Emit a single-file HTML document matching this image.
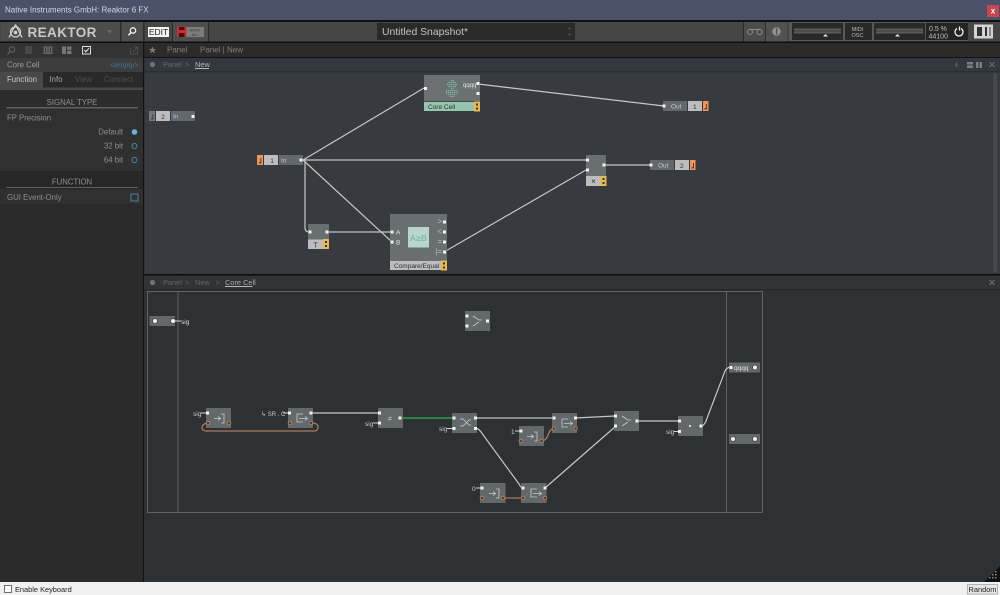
<!DOCTYPE html>
<html><head><meta charset="utf-8"><style>
html,body{margin:0;padding:0;width:1000px;height:595px;overflow:hidden;background:#222}
svg{display:block;filter:blur(.35px)}
text{font-family:"Liberation Sans",sans-serif;font-size:8px}
.w{fill:none;stroke:#c4c7c6;stroke-width:1.2}
.n{fill:#63686a}
.o{fill:none;stroke:#a87a62;stroke-width:1.3}
.ic{fill:none;stroke:#c8cccc;stroke-width:.8}
.lb{fill:#2b2f30;font-size:6.5px}
</style></head><body>
<svg width="1000" height="595" viewBox="0 0 1000 595" xmlns="http://www.w3.org/2000/svg">
<defs>
<g id="p"><rect x="-1.5" y="-1.5" width="3" height="3" fill="#f2f2f2"/></g>
<g id="c"><circle r="2" fill="#f2f2f2"/><circle r="2.6" fill="none" stroke="#45494a" stroke-width=".7"/></g>
<g id="op"><circle r="1.8" fill="#4a3f3a" stroke="#b07c62" stroke-width="1"/></g>
<g id="y"><rect width="6" height="10" fill="#e8b94e"/><rect x="2" y="2" width="2" height="2" fill="#3d3520"/><rect x="2" y="6" width="2" height="2" fill="#3d3520"/></g>
<g id="note"><path d="M3.8 2v5.4H1.6V6.2h1.4V2z" fill="#2f2f2f"/></g>
</defs>
<!-- title bar -->
<rect width="1000" height="20" fill="#4b5169"/>
<text x="5" y="12.500" fill="#d4d6de" font-size="8">Native Instruments GmbH: Reaktor 6 FX</text>
<rect x="987" y="5" width="12" height="12" fill="#c9454f"/>
<text x="993" y="13.300" text-anchor="middle" fill="#fff" style="font-size:8px;font-weight:bold">x</text>
<rect y="20" width="1000" height="2" fill="#111"/>
<!-- toolbar -->
<rect y="22" width="1000" height="19.500" fill="#464646"/>
<rect x="1" y="22" width="119" height="19.500" fill="#4c4c4c"/>
<rect x="120" y="22" width="1.500" height="19.500" fill="#2c2c2c"/>
<rect x="143" y="22" width="1.500" height="19.500" fill="#2c2c2c"/>
<rect x="121.500" y="22" width="21.500" height="19.500" fill="#4e4e4e"/>
<rect x="172" y="22" width="1" height="19.500" fill="#2c2c2c"/>
<rect x="208" y="22" width="1" height="19.500" fill="#2c2c2c"/>
<rect x="173" y="22" width="35" height="19.500" fill="#4e4e4e"/>
<circle cx="15.500" cy="32" r="5" fill="none" stroke="#d0d0d0" stroke-width="1.300"/>
<path d="M15.500 24.500L9 37.500M15.500 24.500L22 37.500" stroke="#d0d0d0" stroke-width="1.200" fill="none"/>
<circle cx="15.500" cy="32.500" r="1.800" fill="#d0d0d0"/>
<text x="27.500" y="37" fill="#c9c9c9" style="font-size:13.500px;font-weight:bold;letter-spacing:.4px">REAKTOR</text>
<path d="M106.500 30h6l-3 3.500z" fill="#666"/>
<circle cx="133" cy="30.500" r="2.700" fill="none" stroke="#f0f0f0" stroke-width="1.300"/>
<path d="M131 32.500l-2.500 2.800" stroke="#f0f0f0" stroke-width="1.500"/>
<rect x="148" y="27" width="21" height="10" fill="#f4f4f4"/>
<text x="158.500" y="35.200" text-anchor="middle" fill="#1c1c1c" style="font-size:8.500px">EDIT</text>
<rect x="177" y="26.500" width="9.500" height="10.500" fill="#d22a2a"/>
<rect x="179" y="27" width="5.500" height="3" fill="#3a1414"/><rect x="179" y="33" width="5.500" height="4" fill="#3a1414"/>
<rect x="186.500" y="27" width="17.500" height="10" fill="#7d7d7d"/>
<text x="195" y="31.500" text-anchor="middle" fill="#333" style="font-size:4px">HOST</text>
<text x="195" y="35.800" text-anchor="middle" fill="#333" style="font-size:4px">ALL</text>
<rect x="377" y="23" width="198" height="17" fill="#2a2a2a"/>
<text x="382" y="35" fill="#c3c3c3" style="font-size:10.400px">Untitled Snapshot*</text>
<path d="M567 29.500l2.500-2.500 2.500 2.500zM567 33.500l2.500 2.500 2.500-2.500z" fill="#484848"/>
<rect x="743" y="22" width="1" height="19.500" fill="#2c2c2c"/><rect x="765" y="22" width="1" height="19.500" fill="#2c2c2c"/><rect x="766" y="22" width="21" height="19.500" fill="#515151"/>
<rect x="744" y="22" width="21" height="19.500" fill="#4c4c4c"/>
<circle cx="750" cy="32" r="2.500" fill="none" stroke="#8c8c8c"/><circle cx="759.500" cy="32" r="2.500" fill="none" stroke="#8c8c8c"/><path d="M750 29.500h9.500" stroke="#8c8c8c"/>
<circle cx="776.500" cy="31.500" r="4.300" fill="#8f8f8f"/><rect x="776" y="28.500" width="1.200" height="6" fill="#4d4d4d"/>
<rect x="789" y="22" width="179" height="19" fill="#585858"/>
<rect x="792" y="23" width="83" height="17" fill="#292929"/>
<rect x="843" y="23" width="2" height="17" fill="#585858"/>
<rect x="872" y="23" width="2" height="17" fill="#585858"/>
<rect x="874" y="23" width="51" height="17" fill="#292929"/>
<rect x="925" y="23" width="2" height="17" fill="#585858"/>
<rect x="926" y="23" width="42" height="17" fill="#242424"/>
<rect x="794" y="28.500" width="47" height="5" fill="#5c5c5c"/><rect x="794" y="30.500" width="47" height="1" fill="#3a3a3a"/>
<path d="M823 36.500l2.500-2.500 2.500 2.500z" fill="#e8e8e8"/>
<text x="857.500" y="30.800" text-anchor="middle" fill="#bbb" style="font-size:5.500px">MIDI</text>
<text x="857.500" y="37.200" text-anchor="middle" fill="#bbb" style="font-size:5.500px">OSC</text>
<rect x="876" y="28.500" width="47" height="5" fill="#5c5c5c"/><rect x="876" y="30.500" width="47" height="1" fill="#3a3a3a"/>
<path d="M895 36.500l2.500-2.500 2.500 2.500z" fill="#e8e8e8"/>
<text x="929" y="31" fill="#c0c0c0" style="font-size:7px">0.5 %</text>
<text x="928.500" y="38.500" fill="#c0c0c0" style="font-size:7px">44100</text>
<path d="M957 28.500a4 4 0 1 0 4 0" fill="none" stroke="#eee" stroke-width="1.300"/><path d="M960 26.500v4" stroke="#eee" stroke-width="1.300" transform="translate(-.5)"/>
<rect x="974" y="24.500" width="19" height="14" fill="#d4d4d4"/>
<rect x="977" y="27" width="5" height="9" fill="#333"/><rect x="985" y="27" width="2" height="9" fill="#333"/><rect x="989" y="27" width="2" height="9" fill="#888"/>
<rect y="41.500" width="1000" height="1.500" fill="#0f0f0f"/>
<!-- main top bars -->
<rect x="144" y="43" width="856" height="14" fill="#2d2b29"/>
<text x="167" y="52.500" fill="#7d7d7d" font-size="8">Panel</text>
<text x="200" y="52.500" fill="#7d7d7d" font-size="8">Panel | New</text>
<path d="M152.500 46.500l1 2.500h2.500l-2 1.600.8 2.600-2.300-1.500-2.300 1.500.8-2.600-2-1.600h2.500z" fill="#7c7c7c"/>
<rect x="144" y="57" width="856" height="1" fill="#131313"/>
<rect x="144" y="58" width="856" height="13" fill="#32383d"/>
<rect x="144" y="71" width="856" height="1.500" fill="#2b2e31"/>
<rect x="144" y="72.500" width="856" height="201.500" fill="#373b3f"/>
<circle cx="152.500" cy="64.500" r="2.600" fill="#6f7376"/>
<text x="163" y="67" fill="#666c70" style="font-size:7.400px">Panel</text>
<text x="185" y="67" fill="#666c70" style="font-size:7.400px">&gt;</text>
<text x="195" y="67" fill="#b5b8ba" style="font-size:7.400px">New</text>
<rect x="195" y="68" width="14" height="1" fill="#b5b8ba"/>
<path d="M955 64h3M956.500 62v5M958.500 66h-3" stroke="#5c6266" stroke-width=".8"/>
<rect x="967" y="62" width="6" height="2.500" fill="#7b7f82"/><rect x="967" y="65.500" width="6" height="2.500" fill="#7b7f82"/>
<rect x="976" y="62" width="2.500" height="6" fill="#7b7f82"/><rect x="979.500" y="62" width="2.500" height="6" fill="#7b7f82"/>
<path d="M989.500 62l5 5M994.500 62l-5 5" stroke="#6d7174" stroke-width="1"/>
<rect x="993" y="73" width="4" height="199" rx="1" fill="#46494c"/>
<!-- sidebar -->
<rect y="43" width="143.500" height="539" fill="#2a2a2a"/>
<rect x="143" y="43" width="1.200" height="539" fill="#111"/>
<rect y="43" width="143" height="15" fill="#333"/>
<circle cx="12" cy="49.500" r="2.700" fill="none" stroke="#666" stroke-width="1"/><path d="M10 51.500l-2.500 3" stroke="#666"/>
<path d="M25 47h7M25 49h7M25 51h7M25 53h7" stroke="#5c5c5c" stroke-width=".9"/>
<rect x="43.500" y="46.500" width="9" height="7.500" fill="#666"/><path d="M45.500 47.500v5.500M48 47.500v5.500M50.500 47.500v5.500" stroke="#333" stroke-width=".8"/>
<rect x="62" y="46.500" width="4" height="7.500" fill="#777"/><rect x="67" y="46.500" width="4.500" height="3.300" fill="#777"/><rect x="67" y="50.700" width="4.500" height="3.300" fill="#777"/>
<rect x="82.500" y="46.500" width="8" height="7.500" fill="none" stroke="#ddd"/><path d="M84.300 50l1.600 1.800 3-3.600" fill="none" stroke="#eee" stroke-width="1"/>
<path d="M130.500 47.500v6.500h7v-4M133 52l4-4.500M134 47h3.500v3" fill="none" stroke="#555" stroke-width=".8"/>
<rect y="58" width="143" height="14" fill="#3d3d3d"/>
<text x="7" y="67.500" fill="#9c9c9c" style="font-size:7.800px">Core Cell</text>
<text x="138.500" y="67.500" text-anchor="end" fill="#43789f" style="font-size:7.400px;font-style:italic">&lt;empty&gt;</text>
<rect y="72" width="143" height="15" fill="#292929"/>
<rect y="72" width="43" height="15.500" fill="#484848"/>
<text x="7" y="82" fill="#c8c8c8" style="font-size:7.800px">Function</text>
<text x="49.500" y="82" fill="#a0a0a0" style="font-size:7.800px">Info</text>
<text x="75" y="82" fill="#4f4f4f" style="font-size:7.800px">View</text>
<text x="104" y="82" fill="#4f4f4f" style="font-size:7.800px">Connect</text>
<rect y="87.500" width="143" height="2.500" fill="#484848"/>
<rect y="90" width="143" height="80" fill="#2c2c2c"/>
<text x="72" y="105" text-anchor="middle" fill="#8f8f8f" style="font-size:7.800px">SIGNAL TYPE</text>
<rect x="6" y="107" width="132" height="1.500" fill="#5f5f5f"/>
<rect y="110" width="143" height="61" fill="#303030"/>
<text x="7" y="120.500" fill="#8f8f8f" style="font-size:7.800px">FP Precision</text>
<text x="123" y="134.500" text-anchor="end" fill="#8f8f8f" style="font-size:7.800px">Default</text>
<text x="123" y="148.500" text-anchor="end" fill="#8f8f8f" style="font-size:7.800px">32 bit</text>
<text x="123" y="162.500" text-anchor="end" fill="#8f8f8f" style="font-size:7.800px">64 bit</text>
<circle cx="134.500" cy="132" r="2.800" fill="#66b0e0"/>
<circle cx="134.500" cy="146" r="2.500" fill="none" stroke="#4d86a8" stroke-width="1"/>
<circle cx="134.500" cy="160" r="2.500" fill="none" stroke="#4d86a8" stroke-width="1"/>
<rect y="171" width="143" height="33" fill="#272727"/>
<text x="72" y="184.500" text-anchor="middle" fill="#8f8f8f" style="font-size:7.800px">FUNCTION</text>
<rect x="6" y="187" width="132" height="1" fill="#5f5f5f"/>
<rect y="189" width="143" height="15" fill="#303030"/>
<text x="7" y="200" fill="#8f8f8f" style="font-size:7.800px">GUI Event-Only</text>
<rect x="131" y="194" width="7" height="7" fill="none" stroke="#4d86a8" stroke-width="1"/>
<!-- upper wires -->
<path class="w" d="M303 160L424 88M303 160H586M303 160L392 242M305 161V228Q305 232 310 232M327 232H392M444 252L586 170M604 165H650M478 84L664 106"/>
<!-- In 2 -->
<rect x="149" y="111" width="6" height="10" fill="#74797b"/><use href="#note" x="149.500" y="112"/>
<rect x="156" y="111" width="14" height="10" fill="#bdbdbd"/><text x="163" y="119" text-anchor="middle" class="lb">2</text>
<rect x="171" y="111" width="24" height="10" class="n"/><text x="173" y="118.700" fill="#bcc0c1" style="font-size:6.500px">In</text>
<use href="#p" x="193" y="116.500"/>
<!-- In 1 -->
<rect x="257" y="155" width="6" height="10" fill="#f0935a"/><use href="#note" x="257.500" y="156"/>
<rect x="264" y="155" width="14" height="10" fill="#bdbdbd"/><text x="272" y="163" text-anchor="middle" class="lb">1</text>
<rect x="279" y="155" width="24" height="10" class="n"/><text x="281" y="162.700" fill="#bcc0c1" style="font-size:6.500px">In</text>
<use href="#p" x="301" y="160"/>
<!-- Core Cell -->
<rect x="424" y="75" width="56" height="36" fill="#6b7072"/>
<rect x="424" y="101" width="56" height="1" fill="#44484a"/>
<rect x="424" y="102" width="50" height="9" fill="#96c4ae"/><text x="428" y="108.800" class="lb">Core Cell</text>
<use href="#y" x="474" y="101.500"/>
<g fill="none" stroke="#7fc0a8" stroke-width="1.200" stroke-dasharray="1.200 .9"><path d="M447 84.500h11M448.500 82.500h8M448.500 86.500h8M451 80.500h3M451 88.500h3M446 90.500h12M446 92.500h12M447.500 94.500h9M449.500 96.500h5"/></g>
<text x="463" y="87" fill="#e8e8e8" style="font-size:6px">qqqq</text>
<use href="#p" x="478" y="83.500"/><use href="#p" x="478" y="93.500"/><use href="#p" x="425.500" y="88.500"/>
<!-- Out 1 -->
<rect x="663" y="101" width="24" height="10" class="n"/><text x="671" y="108.700" fill="#c5c8c9" style="font-size:6.500px">Out</text>
<rect x="688" y="101" width="14" height="10" fill="#bdbdbd"/><text x="693" y="109" class="lb">1</text>
<rect x="703" y="101" width="5.500" height="10" fill="#f0935a"/><use href="#note" x="703" y="102"/>
<use href="#p" x="664" y="106"/>
<!-- Out 2 -->
<rect x="650" y="160" width="24" height="10" class="n"/><text x="658" y="167.700" fill="#c5c8c9" style="font-size:6.500px">Out</text>
<rect x="675" y="160" width="14" height="10" fill="#bdbdbd"/><text x="680" y="168" class="lb">2</text>
<rect x="690" y="160" width="5.500" height="10" fill="#f0935a"/><use href="#note" x="690" y="161"/>
<use href="#p" x="651" y="165"/>
<!-- multiply -->
<rect x="586" y="155" width="20" height="31" fill="#696e70"/>
<rect x="586" y="176" width="15" height="10" fill="#bdbdbd"/><text x="593.500" y="183.800" text-anchor="middle" class="lb" style="font-size:8px">×</text>
<use href="#y" x="600.500" y="176"/>
<use href="#p" x="587.500" y="160"/><use href="#p" x="587.500" y="170"/><use href="#p" x="604" y="165"/>
<!-- T -->
<rect x="308" y="224" width="21" height="25" fill="#696e70"/>
<rect x="308" y="239.500" width="15" height="9.500" fill="#bdbdbd"/><text x="315.500" y="247.300" text-anchor="middle" class="lb" style="font-size:7px">T</text>
<use href="#y" x="323" y="239"/>
<use href="#p" x="310" y="232"/><use href="#p" x="327" y="232"/>
<!-- Compare -->
<rect x="390" y="214" width="57" height="56" fill="#696e70"/>
<rect x="408" y="227" width="21" height="20.500" fill="#b8d6ce"/>
<text x="418.500" y="241" text-anchor="middle" fill="#6eb0a6" style="font-size:8.500px;letter-spacing:.3px">A≥B</text>
<rect x="390" y="261" width="51" height="9" fill="#bdbdbd"/><text x="394" y="267.800" class="lb">Compare/Equal</text>
<use href="#y" x="441" y="260.500"/>
<use href="#p" x="392" y="232"/><use href="#p" x="392" y="242"/>
<text x="396" y="234.500" fill="#e4e4e4" style="font-size:6.500px">A</text><text x="396" y="244.500" fill="#e4e4e4" style="font-size:6.500px">B</text>
<use href="#p" x="444.500" y="222"/><use href="#p" x="444.500" y="232"/><use href="#p" x="444.500" y="242"/><use href="#p" x="444.500" y="252"/>
<g fill="#b8bcbd" style="font-size:5.500px" text-anchor="end"><text x="442" y="224">&gt;</text><text x="442" y="234">&lt;</text><text x="442" y="244">=</text><text x="442" y="254">|=</text></g>
<!-- lower panel -->
<rect x="144" y="274" width="856" height="1.500" fill="#0c0c0c"/>
<rect x="144" y="275.500" width="856" height="14" fill="#303437"/>
<rect x="144" y="289" width="856" height="1.500" fill="#26282a"/>
<rect x="144" y="290.500" width="856" height="291.500" fill="#2e3133"/>
<circle cx="152.500" cy="282.500" r="2.600" fill="#6f7376"/>
<text x="163" y="285" fill="#5f6569" style="font-size:7.400px">Panel</text>
<text x="185" y="285" fill="#5f6569" style="font-size:7.400px">&gt;</text>
<text x="195" y="285" fill="#5f6569" style="font-size:7.400px">New</text>
<text x="215.500" y="285" fill="#5f6569" style="font-size:7.400px">&gt;</text>
<text x="225" y="285" fill="#a9acae" style="font-size:7.400px">Core Cell</text>
<rect x="225" y="286" width="27.500" height="1" fill="#b5b8ba"/>
<path d="M989.500 280l5 5M994.500 280l-5 5" stroke="#6d7174" stroke-width="1"/>
<rect x="147.500" y="291.500" width="615" height="221" fill="none" stroke="#5f6366" stroke-width="1"/>
<path d="M178 292V512M726.500 292V512" stroke="#5f6366" stroke-width="1"/>
<!-- lower wires -->
<path class="w" d="M310 413H378M475 418H552M575 418L615 416M475 428Q478 428 481 432L519 484Q521 488 523 488M545 488L616 426M636 421H680M701 426Q704 426 706 421L725 371Q727 367 731 367" />
<path d="M400 418H456" stroke="#2fb45f" stroke-width="1.200"/>
<path d="M456 415.500l3 2.500-3 2.500z" fill="#3bc46c"/>
<path class="o" d="M207 423Q202 424 202 428Q202 431 207 431H314Q318 431 318 427Q318 423 311 423"/>
<path class="o" d="M541 441Q546 441 548 435Q550 429 554 428"/>
<path class="o" d="M503 498H523"/>
<!-- sig -->
<rect x="149.500" y="316" width="25.500" height="10" class="n"/><use href="#c" x="155" y="321"/><use href="#c" x="173" y="321"/>
<path d="M175 321h6" stroke="#d0d0d0"/><text x="181" y="324" fill="#d8d8d8" style="font-size:6.500px">sig</text>
<!-- top merge -->
<rect x="465" y="311" width="25" height="20" class="n"/>
<use href="#p" x="467" y="316"/><use href="#p" x="467" y="326"/><use href="#p" x="487.500" y="321"/>
<path class="ic" d="M473 316l6 4h3M473 326l6-4"/>
<!-- read 1 -->
<rect x="206" y="408" width="25" height="20" class="n"/>
<text x="193" y="416" fill="#c8c8c8" style="font-size:6.500px">sig</text><path d="M201 413H208" stroke="#d0d0d0"/>
<use href="#p" x="207.500" y="413"/><use href="#op" x="208" y="423"/><use href="#op" x="229" y="423"/>
<path class="ic" d="M214 418.500h6M218 416.500l2.500 2-2.500 2M221 414h3v9h-3"/>
<!-- write 1 -->
<rect x="288" y="408" width="25" height="20" class="n"/>
<text x="261" y="416" fill="#c8c8c8" style="font-size:6px">↳ SR . C</text><path d="M283 413H290" stroke="#d0d0d0"/>
<use href="#p" x="289.500" y="413"/><use href="#p" x="311" y="413"/><use href="#op" x="290" y="423"/><use href="#op" x="311" y="423"/>
<path class="ic" d="M303 414h-6v8h6M299 418.500h8M305 416.500l2.500 2-2.500 2"/>
<!-- neq -->
<rect x="378" y="408" width="25" height="20" class="n"/>
<text x="365" y="426" fill="#c8c8c8" style="font-size:6.500px">sig</text><path d="M373 423h6" stroke="#d0d0d0"/>
<use href="#p" x="379.500" y="413"/><use href="#p" x="379.500" y="423"/><use href="#p" x="400" y="418"/>
<text x="390" y="421" text-anchor="middle" fill="#cfd2d2" style="font-size:7px">≠</text>
<!-- switch -->
<rect x="452" y="413" width="25" height="20" class="n"/>
<text x="439" y="431" fill="#c8c8c8" style="font-size:6.500px">sig</text><path d="M447 428.500h7" stroke="#d0d0d0"/>
<use href="#p" x="454" y="418"/><use href="#p" x="454" y="428.500"/><use href="#p" x="475.500" y="418"/><use href="#p" x="475.500" y="428.500"/>
<path class="ic" d="M460 419h3l6 6h2M460 426h3l6-6h2"/>
<!-- write upper -->
<rect x="552" y="413" width="25" height="20" class="n"/>
<use href="#p" x="554" y="418"/><use href="#p" x="575.500" y="418"/><use href="#op" x="554" y="428.500"/><use href="#op" x="575.500" y="428.500"/>
<path class="ic" d="M568 419h-6v8h6M564 423.500h8M570 421.500l2.500 2-2.500 2"/>
<!-- read upper -->
<rect x="519" y="426" width="25" height="20" class="n"/>
<text x="511" y="434" fill="#c8c8c8" style="font-size:6.500px">1</text><path d="M515 431h6" stroke="#d0d0d0"/>
<use href="#p" x="521" y="431"/><use href="#op" x="521" y="441"/><use href="#op" x="541.500" y="441"/>
<path class="ic" d="M527 436.500h6M531 434.500l2.500 2-2.500 2M534 432h3v9h-3"/>
<!-- merge -->
<rect x="614" y="411" width="25" height="20" class="n"/>
<use href="#p" x="615.500" y="416"/><use href="#p" x="615.500" y="426"/><use href="#p" x="637" y="421"/>
<path class="ic" d="M622 416l6 4h3M622 426l6-4"/>
<!-- mult -->
<rect x="678" y="416" width="25" height="20" class="n"/>
<text x="666" y="434" fill="#c8c8c8" style="font-size:6.500px">sig</text><path d="M674 431.500h6" stroke="#d0d0d0"/>
<use href="#p" x="679.500" y="421"/><use href="#p" x="679.500" y="431.500"/><use href="#p" x="701" y="426"/>
<rect x="689" y="425" width="2" height="2" fill="#cfd2d2"/>
<!-- read lower -->
<rect x="480" y="483" width="25.500" height="20" class="n"/>
<text x="472" y="491" fill="#c8c8c8" style="font-size:6.500px">0</text><path d="M476 488h6" stroke="#d0d0d0"/>
<use href="#p" x="482" y="488"/><use href="#op" x="482" y="498"/><use href="#op" x="503" y="498"/>
<path class="ic" d="M489 493.500h6M493 491.500l2.500 2-2.500 2M496 489h3v9h-3"/>
<!-- write lower -->
<rect x="521" y="483" width="25.500" height="20" class="n"/>
<use href="#p" x="523" y="488"/><use href="#p" x="545" y="488"/><use href="#op" x="523" y="498"/><use href="#op" x="545" y="498"/>
<path class="ic" d="M537 489h-6v8h6M533 493.500h8M539 491.500l2.500 2-2.500 2"/>
<!-- outputs -->
<rect x="729" y="362.500" width="31" height="10" class="n"/><use href="#p" x="731" y="367.500"/><use href="#c" x="755" y="367.500"/>
<text x="734" y="370" fill="#e8e8e8" style="font-size:6.500px">qqqq</text>
<rect x="729" y="434" width="31" height="10" class="n"/><use href="#c" x="733" y="439"/><use href="#c" x="755" y="439"/>
<!-- resize grip -->
<path d="M1000 566V582H984z" fill="#111"/>
<g fill="#8a8a8a"><rect x="995" y="571" width="1.500" height="1.500"/><rect x="992" y="574" width="1.500" height="1.500"/><rect x="995" y="574" width="1.500" height="1.500"/><rect x="989" y="577" width="1.500" height="1.500"/><rect x="992" y="577" width="1.500" height="1.500"/><rect x="995" y="577" width="1.500" height="1.500"/></g>
<!-- bottom bar -->
<rect y="582" width="1000" height="13" fill="#f0f0f0"/>
<rect x="4.500" y="585.500" width="7" height="7" fill="#fff" stroke="#707070" stroke-width="1"/>
<text x="15" y="592" fill="#222" style="font-size:7.400px">Enable Keyboard</text>
<rect x="967.500" y="584.500" width="30" height="9.500" fill="#e6e6e6" stroke="#b4b4b4" stroke-width="1"/>
<text x="982.500" y="592" text-anchor="middle" fill="#222" style="font-size:7.400px">Random</text>
</svg>
</body></html>
